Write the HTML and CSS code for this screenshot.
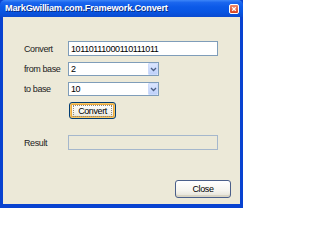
FILE: index.html
```html
<!DOCTYPE html>
<html>
<head>
<meta charset="utf-8">
<link rel="stylesheet" href="styles.css">
</head>
<body>
<div class="window">
  <div class="titlebar">
    <span class="title">MarkGwilliam.com.Framework.Convert</span>
    <span class="close-x">
      <svg width="9" height="9" viewBox="0 0 9 9"><path d="M2.5 2.5 L6.5 6.5 M6.5 2.5 L2.5 6.5" stroke="#fff" stroke-width="1.4" fill="none"/></svg>
    </span>
  </div>
  <div class="client">
    <div class="row">
      <span class="label">Convert</span>
      <div class="field text">10110111000110111011</div>
    </div>
    <div class="row">
      <span class="label">from base</span>
      <div class="field select"><span class="val">2</span><span class="drop"><svg width="7" height="5" viewBox="0 0 7 5"><path d="M1 1 L3.5 3.5 L6 1" stroke="#4d6185" stroke-width="1.3" fill="none"/></svg></span></div>
    </div>
    <div class="row">
      <span class="label">to base</span>
      <div class="field select"><span class="val">10</span><span class="drop"><svg width="7" height="5" viewBox="0 0 7 5"><path d="M1 1 L3.5 3.5 L6 1" stroke="#4d6185" stroke-width="1.3" fill="none"/></svg></span></div>
    </div>
    <div class="btnrow">
      <button class="btn default"><span class="focus">Convert</span></button>
    </div>
    <div class="row result-row">
      <span class="label">Result</span>
      <div class="field result"></div>
    </div>
    <button class="btn close">Close</button>
  </div>
</div>
</body>
</html>
```
FILE: styles.css
```css
html, body {
  margin: 0;
  padding: 0;
}
body {
  width: 243px;
  height: 208px;
  overflow: hidden;
  font-family: "Liberation Sans", Arial, sans-serif;
  font-size: 9px;
  letter-spacing: -0.4px;
  color: #000;
}
.window {
  width: 243px;
  height: 208px;
  display: flex;
  flex-direction: column;
  background: #0842d0;
  box-sizing: border-box;
}
.titlebar {
  height: 17px;
  flex: none;
  display: flex;
  align-items: center;
  justify-content: space-between;
  padding: 0 4px 0 5px;
  background: linear-gradient(to bottom, #3d86f8 0%, #1a66ee 15%, #0c5ae8 40%, #0855e2 70%, #0a4ad0 100%);
  border-radius: 5px 5px 0 0;
}
.title {
  color: #fff;
  font-weight: bold;
  font-size: 9.2px;
  letter-spacing: -0.2px;
  text-shadow: 1px 1px 0 #0a2b80;
  margin-top: -1px;
}
.close-x {
  width: 10px;
  height: 10px;
  box-sizing: border-box;
  border: 1px solid #fff;
  border-radius: 2px;
  background: linear-gradient(to bottom, #f08a6a, #d8411f);
  display: flex;
  align-items: center;
  justify-content: center;
}
.close-x svg {
  display: block;
  width: 8px;
  height: 8px;
}
.client {
  flex: 1;
  margin: 0 3px 4px 3px;
  background: #ece9d8;
  padding: 24px 0 6px 21px;
  display: flex;
  flex-direction: column;
}
.row {
  display: flex;
  align-items: center;
  margin-bottom: 6px;
}
.label {
  width: 44px;
  flex: none;
  color: #222;
}
.field {
  box-sizing: border-box;
  border: 1px solid #7f9db9;
  background: #fff;
  height: 14px;
  display: flex;
  align-items: center;
}
.text {
  width: 150px;
  height: 15px;
  padding-left: 2px;
}
.select {
  width: 91px;
  padding-left: 2px;
  justify-content: space-between;
}
.drop {
  width: 10px;
  height: 12px;
  box-sizing: border-box;
  background: linear-gradient(to bottom, #dbe6fe, #bfd1fa);
  border: 1px solid #cddbfb;
  border-radius: 1px;
  display: flex;
  align-items: center;
  justify-content: center;
}
.drop svg {
  display: block;
}
.btnrow {
  padding-left: 45px;
  margin-bottom: 16px;
}
.btn {
  font-family: "Liberation Sans", Arial, sans-serif;
  font-size: 9px;
  letter-spacing: -0.4px;
  color: #000;
  box-sizing: border-box;
  border: 1px solid #003c74;
  border-radius: 3px;
  background: linear-gradient(to bottom, #ffffff 0%, #f5f4ee 60%, #e3e1d6 100%);
  padding: 0;
  margin: 0;
  display: flex;
  align-items: center;
  justify-content: center;
}
.default {
  width: 47px;
  height: 17px;
  box-shadow: inset 0 0 0 1px #f7c768, inset 0 0 0 2px #eaa93e;
}
.focus {
  border: 1px dotted #8a8a80;
  padding: 0 4px;
  line-height: 10px;
}
.result {
  width: 150px;
  height: 15px;
  background: #ece9d8;
  border-color: #a5b7cc;
}
.close {
  width: 56px;
  height: 18px;
  margin-top: auto;
  align-self: flex-end;
  margin-right: 9px;
  border-color: #4a5f8a;
  box-shadow: inset 0 -2px 0 #d8d4c4;
}
```
